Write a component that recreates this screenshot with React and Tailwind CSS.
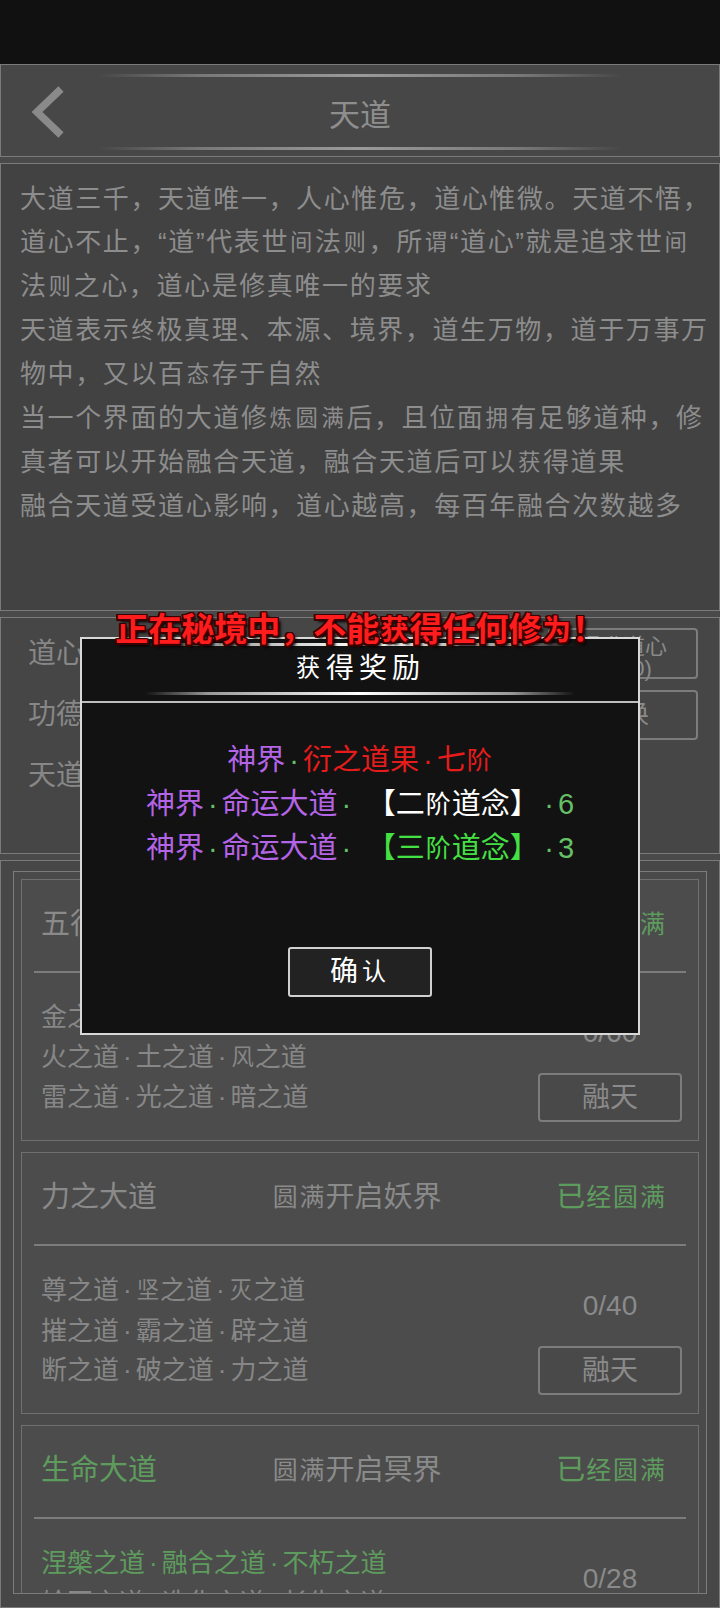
// glyphs the game font lacks; they fall back to a smaller face
const FALLBACK = new Set('间则谓终态炼圆满拥获坚灭阶认经风为')

function rich(text) {
  return Array.from(text).map((ch, i) => {
    if (FALLBACK.has(ch)) {
      return (
        <span key={i} className="relative -top-[1px] px-[1px] text-[0.86em]">
          {ch}
        </span>
      )
    }
    if (ch === '·') {
      return (
        <span key={i} className="px-[4px]">
          ·
        </span>
      )
    }
    return ch
  })
}

const introLines = [
  '大道三千，天道唯一，人心惟危，道心惟微。天道不悟，',
  '道心不止，“道”代表世间法则，所谓“道心”就是追求世间',
  '法则之心，道心是修真唯一的要求',
  '天道表示终极真理、本源、境界，道生万物，道于万事万',
  '物中，又以百态存于自然',
  '当一个界面的大道修炼圆满后，且位面拥有足够道种，修',
  '真者可以开始融合天道，融合天道后可以获得道果',
  '融合天道受道心影响，道心越高，每百年融合次数越多',
]

const daoGroups = [
  {
    title: '五行大道',
    unlock: '圆满开启仙界',
    lines: ['金之道·木之道·水之道', '火之道·土之道·风之道', '雷之道·光之道·暗之道'],
    progress: '0/60',
  },
  {
    title: '力之大道',
    unlock: '圆满开启妖界',
    lines: ['尊之道·坚之道·灭之道', '摧之道·霸之道·辟之道', '断之道·破之道·力之道'],
    progress: '0/40',
  },
  {
    title: '生命大道',
    unlock: '圆满开启冥界',
    lines: ['涅槃之道·融合之道·不朽之道', '轮回之道·造化之道·长生之道'],
    greenLines: 1,
    progress: '0/28',
    done: true,
  },
]

function HeaderLine() {
  return (
    <div className="h-[3px] w-[524px] rounded-full bg-[linear-gradient(to_right,transparent,#7a7a7a_20%,#9a9a9a_50%,#7a7a7a_80%,transparent)]" />
  )
}

function GlowLine() {
  return (
    <div className="h-[3px] w-[430px] rounded-full bg-[linear-gradient(to_right,transparent,#9a9a9a_15%,#ffffff_50%,#9a9a9a_85%,transparent)]" />
  )
}

function Header() {
  return (
    <div className="flex h-[93px] shrink-0 flex-col items-center border border-[#7a7a7a] bg-[#474747] pt-[9px]">
      <HeaderLine />
      <div className="grid h-[70px] w-full grid-cols-[1fr_auto_1fr] items-center">
        <div className="pl-[28px]">
          <svg width="38" height="52" viewBox="0 0 38 52" fill="none">
            <path d="M32 3 L8 26 L32 49" stroke="#8a8a8a" strokeWidth="7.5" />
          </svg>
        </div>
        <div className="font-['Noto_Sans_CJK_SC',sans-serif] text-[31px] leading-none text-[#8e8e8e]">天道</div>
        <div />
      </div>
      <HeaderLine />
    </div>
  )
}

function Intro() {
  return (
    <div className="mt-[6px] h-[448px] shrink-0 border border-[#7a7a7a] bg-[#424242] pl-[19px] pt-[14px]">
      {introLines.map((line) => (
        <div key={line} className="whitespace-nowrap text-[26px] leading-[43px] tracking-[1.6px] text-[#8d8d8d]">
          {rich(line)}
        </div>
      ))}
    </div>
  )
}

function Stats() {
  return (
    <div className="mt-[6px] h-[237px] shrink-0 border border-[#7a7a7a] bg-[#464646] pl-[27px] pr-[21px] pt-[5px]">
      <div className="flex h-[61px] items-center justify-between">
        <span className="text-[28px] text-[#878787]">道心：1280</span>
        <button className="flex h-[51px] w-[150px] flex-col items-center justify-center rounded-[4px] border-2 border-[#7c7c7c] pt-[9px] text-[22px] leading-[22.5px] text-[#8a8a8a]">
          <span>提升道心</span>
          <span>(0/10)</span>
        </button>
      </div>
      <div className="flex h-[61px] items-center justify-between">
        <span className="text-[28px] text-[#878787]">功德：360</span>
        <button className="flex h-[50px] w-[150px] items-center justify-center rounded-[4px] border-2 border-[#7c7c7c] text-[26px] text-[#8a8a8a]">
          兑换
        </button>
      </div>
      <div className="flex h-[61px] items-center">
        <span className="text-[28px] text-[#878787]">天道：未融合</span>
      </div>
    </div>
  )
}

function DaoCard({ group }) {
  const accent = 'text-[#5e9c5e]'
  return (
    <div className="h-[262px] shrink-0 border border-[#707070] bg-[#4c4c4c] px-[12px]">
      <div className="mt-[17px] flex h-[56px] items-center justify-between pl-[7px] pr-[20px] text-[29px]">
        <span className={group.done ? accent : 'text-[#8a8a8a]'}>{rich(group.title)}</span>
        <span className="text-[#8a8a8a]">{rich(group.unlock)}</span>
        <span className={accent}>{rich('已经圆满')}</span>
      </div>
      <div className="mt-[18px] h-[2px] bg-[#7c7c7c]" />
      <div className="flex justify-between pl-[7px] pr-[4px]">
        <div className="pt-[25px]">
          {group.lines.map((line, i) => (
            <div
              key={line}
              className={`whitespace-nowrap text-[26px] leading-[39.5px] ${
                i < (group.greenLines || 0) ? 'text-[#5e9c5e]' : 'text-[#878787]'
              }`}
            >
              {rich(line)}
            </div>
          ))}
        </div>
        <div className="flex w-[144px] flex-col items-center pt-[40px]">
          <div className="text-[28px] leading-[40px] text-[#8a8a8a]">{group.progress}</div>
          <button className="mt-[20px] h-[49px] w-[144px] rounded-[4px] border-2 border-[#7c7c7c] bg-[#494949] text-[28px] text-[#8a8a8a]">
            融天
          </button>
        </div>
      </div>
    </div>
  )
}

function DaoList() {
  return (
    <div className="mt-[6px] h-[748px] shrink-0 border border-[#7a7a7a] bg-[#474747] px-[12px] pt-[10px]">
      <div className="flex h-[723px] flex-col gap-[11px] overflow-hidden border border-[#7c7c7c] bg-[#4a4a4a] px-[7px] pt-[7px]">
        {daoGroups.map((g) => (
          <DaoCard key={g.title} group={g} />
        ))}
      </div>
    </div>
  )
}

function RewardLine({ name, tier, count, tierClass }) {
  return (
    <div className="whitespace-nowrap">
      <span className="text-[#b464e6]">神界</span>
      <span className="px-[4px] text-[#66c066]">·</span>
      <span className="text-[#b464e6]">{name}</span>
      <span className="px-[4px] text-[#66c066]">·</span>
      <span className={`ml-[26px] mr-[16px] ${tierClass}`}>{rich(tier)}</span>
      <span className="px-[4px] text-[#66c066]">·</span>
      <span className="text-[#66c066]">{count}</span>
    </div>
  )
}

function RewardDialog() {
  return (
    <>
      <div className="absolute left-[80px] top-[637px] flex h-[398px] w-[560px] flex-col border-2 border-[#d8d8d8] bg-[#121212]">
        <div className="flex flex-col items-center pt-[4px]">
          <GlowLine />
          <div className="flex h-[46px] items-center text-[28px] tracking-[5px] text-white">{rich('获得奖励')}</div>
          <GlowLine />
        </div>
        <div className="mt-[6px] h-[2px] bg-[#bdbdbd]" />
        <div className="flex flex-col items-center pt-[36px] text-[29px] leading-[43px]">
          <div className="whitespace-nowrap">
            <span className="text-[#b464e6]">神界</span>
            <span className="px-[4px] text-[#66c066]">·</span>
            <span className="text-[#e61c1c]">{rich('衍之道果·七阶')}</span>
          </div>
          <RewardLine name="命运大道" tier="【二阶道念】" count="6" tierClass="text-white" />
          <RewardLine name="命运大道" tier="【三阶道念】" count="3" tierClass="text-[#44e044]" />
          <button className="mt-[76px] h-[50px] w-[144px] rounded-[3px] border-2 border-[#d0d0d0] bg-[#222] text-[28px] tracking-[3px] text-white">
            {rich('确认')}
          </button>
        </div>
      </div>
      <div className="absolute left-0 top-[610px] w-[720px] text-center text-[33px] font-bold leading-[40px] text-[#ff1c1c] [text-shadow:1.5px_1.5px_0_#3a0000,-1.5px_-1.5px_0_#3a0000,1.5px_-1.5px_0_#3a0000,-1.5px_1.5px_0_#3a0000,0_1.5px_0_#3a0000,0_-1.5px_0_#3a0000,1.5px_0_0_#3a0000,-1.5px_0_0_#3a0000,3px_3px_3px_#000]">
        {rich('正在秘境中，不能获得任何修为！')}
      </div>
    </>
  )
}

export default function App() {
  return (
    <div className="relative h-[1608px] w-[720px] overflow-hidden bg-[#111] font-['Liberation_Sans','Noto_Sans_CJK_SC',sans-serif]">
      <div className="h-[64px] bg-[#111]" />
      <div className="flex flex-col bg-[#4a4a4a]">
        <Header />
        <Intro />
        <Stats />
        <DaoList />
      </div>
      <RewardDialog />
    </div>
  )
}
